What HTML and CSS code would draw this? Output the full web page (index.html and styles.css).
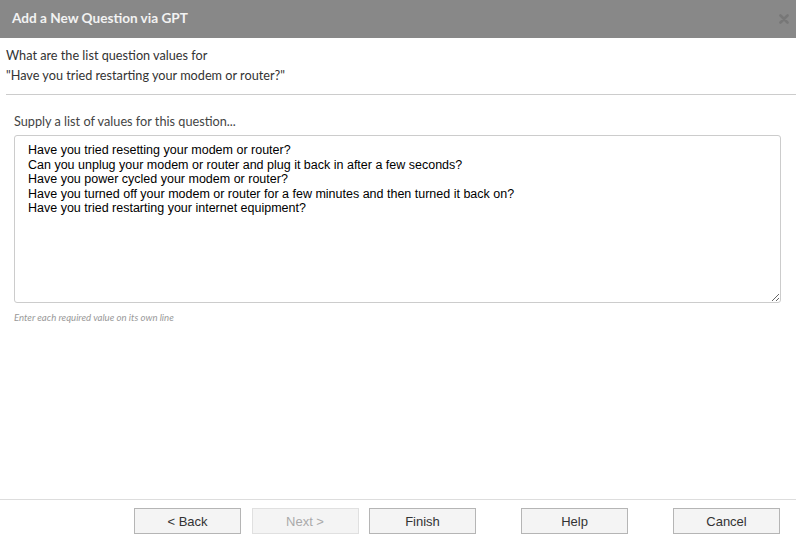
FILE: index.html
```html
<!DOCTYPE html>
<html lang="en">
<head>
<meta charset="UTF-8">
<title>Add a New Question via GPT</title>
<link rel="stylesheet" href="styles.css">
</head>
<body>

<div class="dialog">
  <div class="titlebar">
    <span class="title">Add a New Question via GPT</span>
    <svg class="close" width="10" height="10" viewBox="0 0 10 10">
      <path d="M1.5 1.5 L8.5 8.5 M8.5 1.5 L1.5 8.5" stroke="#777" stroke-width="2.6" stroke-linecap="round"/>
    </svg>
  </div>

  <div class="content">
    <div class="question">
      What are the list question values for<br>
      "Have you tried restarting your modem or router?"
    </div>

    <div class="field">
      <label class="field-label" for="values">Supply a list of values for this question...</label>
      <textarea id="values" class="values">Have you tried resetting your modem or router?
Can you unplug your modem or router and plug it back in after a few seconds?
Have you power cycled your modem or router?
Have you turned off your modem or router for a few minutes and then turned it back on?
Have you tried restarting your internet equipment?</textarea>
      <div class="hint">Enter each required value on its own line</div>
    </div>
  </div>

  <div class="footer">
    <div class="nav-buttons">
      <button class="button">&lt; Back</button>
      <button class="button" disabled>Next &gt;</button>
      <button class="button">Finish</button>
    </div>
    <button class="button">Help</button>
    <button class="button">Cancel</button>
  </div>
</div>

</body>
</html>
```

FILE: styles.css
```css
body {
  margin: 0;
  font-family: Lato, "Liberation Sans", sans-serif;
  background-color: #fff;
}
.dialog {
  width: 796px;
  height: 546px;
  display: flex;
  flex-direction: column;
}
.titlebar {
  height: 38px;
  background-color: #888;
  display: flex;
  align-items: center;
  justify-content: space-between;
  padding: 0 7px 0 12px;
  flex-shrink: 0;
}
.title {
  color: #f2f2f2;
  font-size: 13.6px;
  font-weight: bold;
  padding-bottom: 2px;
}
.close {
  display: block;
}
.content {
  flex: 1;
}
.question {
  margin-left: 6px;
  padding: 7px 0 9px;
  font-size: 12.7px;
  line-height: 20px;
  color: #333;
  border-bottom: 1px solid #ccc;
}
.field {
  padding: 18px 15px 0 14px;
}
.field-label {
  display: block;
  font-size: 12.7px;
  color: #444;
  margin-bottom: 6px;
}
.values {
  display: block;
  box-sizing: border-box;
  width: 100%;
  height: 168px;
  margin: 0;
  padding: 7px 13px;
  border: 1px solid #ccc;
  border-radius: 3px;
  font-family: "Liberation Sans", Arial, sans-serif;
  font-size: 12.5px;
  line-height: 14.6px;
  color: #000;
  resize: vertical;
}
.hint {
  margin-top: 9px;
  font-size: 9.6px;
  font-style: italic;
  color: #999;
}
.footer {
  box-sizing: border-box;
  height: 47px;
  border-top: 1px solid #ddd;
  display: flex;
  align-items: flex-start;
  padding: 8px 16px 0 134px;
  gap: 45px;
  flex-shrink: 0;
}
.nav-buttons {
  display: flex;
  gap: 10.5px;
}
.button {
  width: 107px;
  height: 26px;
  margin: 0;
  padding: 0;
  background-color: #f4f4f4;
  border: 1px solid #b5b5b5;
  font-family: "Liberation Sans", Arial, sans-serif;
  font-size: 13px;
  color: #333;
  cursor: pointer;
}
.button:disabled {
  border-color: #e0e0e0;
  color: #aaa;
  cursor: default;
}
```
